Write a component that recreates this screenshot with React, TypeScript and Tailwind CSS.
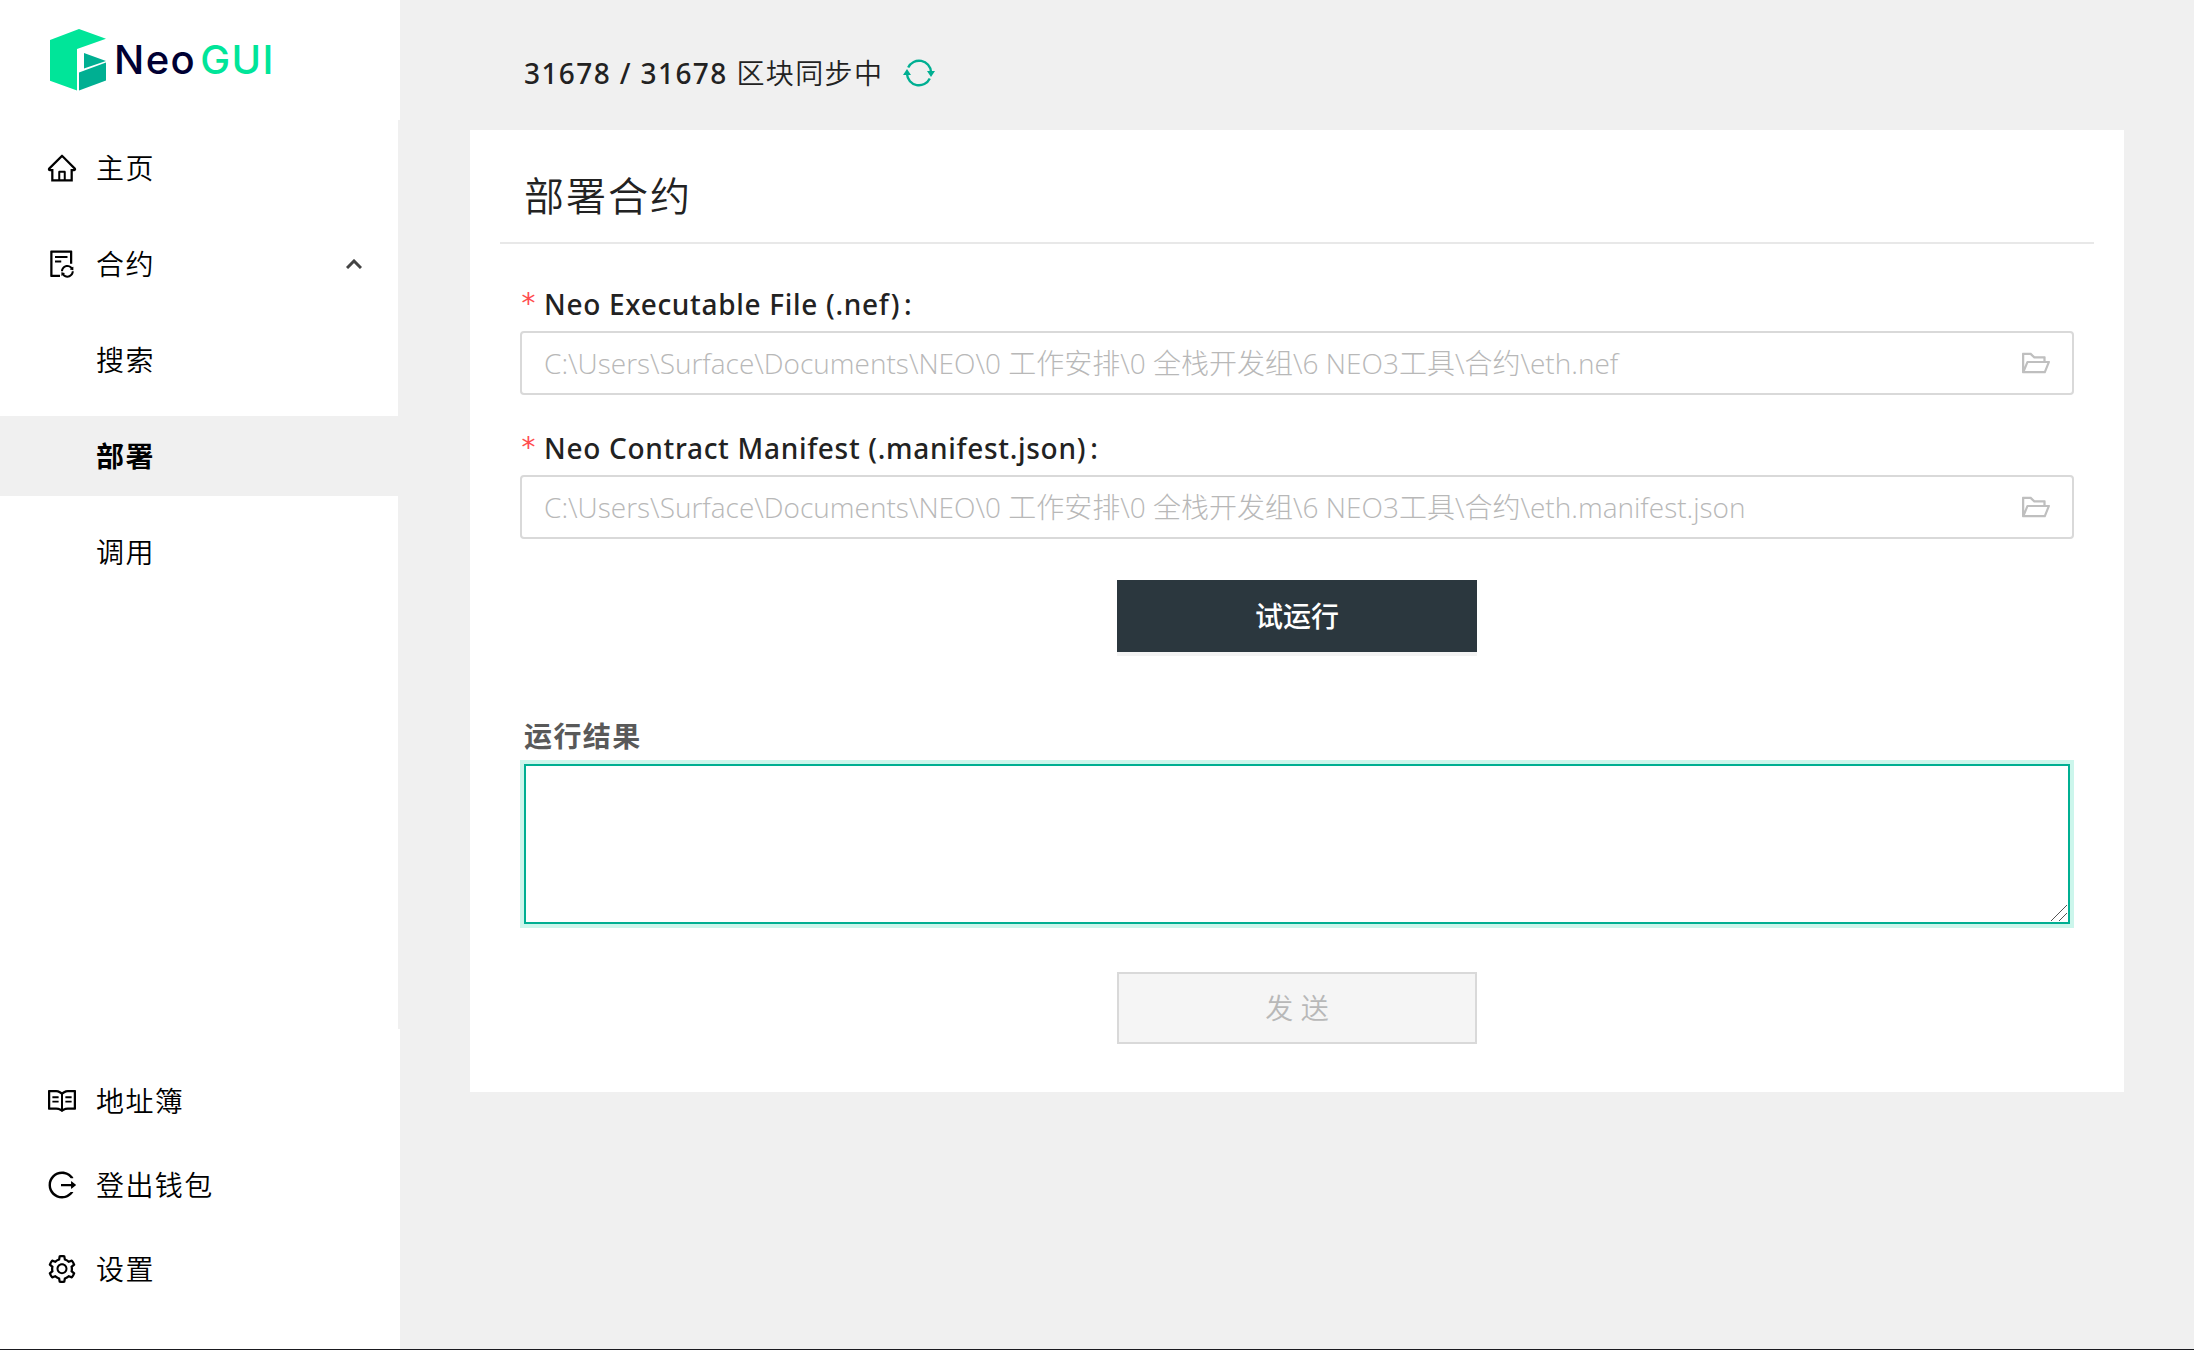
import { useId } from "react";
import type { ReactNode } from "react";
import {
  AiOutlineFileSync,
  AiOutlineFolderOpen,
  AiOutlineHome,
  AiOutlineLogout,
  AiOutlineRead,
  AiOutlineSetting,
} from "react-icons/ai";

const contractLinks = [
  { label: "搜索", active: false },
  { label: "部署", active: true },
  { label: "调用", active: false },
];

const footerLinks = [
  { label: "地址簿", icon: <AiOutlineRead /> },
  { label: "登出钱包", icon: <AiOutlineLogout /> },
  { label: "设置", icon: <AiOutlineSetting /> },
];

function Logo() {
  return (
    <a href="#" className="flex h-[120px] items-center gap-2 pl-[50px]" aria-label="Neo GUI">
      <svg viewBox="0 0 56 62" className="h-[62px] w-14" aria-hidden="true">
        <path d="M0 11 29 0 56 9.7 27 20V61.5L0 51.7Z" fill="#00e599" />
        <path d="M34 24 56 32 34 39.5Z" fill="#00af92" />
        <path d="M29 43.5 56 33.5V51.5L29 61.5Z" fill="#00af92" />
      </svg>
      <span className="flex gap-1 font-['Inter'] text-[40px] leading-none font-medium">
        <span className="text-[#000033]">Neo</span>
        <span className="text-[#00e599]">GUI</span>
      </span>
    </a>
  );
}

function NavLink({ icon, children }: { icon: ReactNode; children: ReactNode }) {
  return (
    <a href="#" className="flex h-20 items-center gap-[18px] pl-[46px]">
      <span className="text-[32px]">{icon}</span>
      {children}
    </a>
  );
}

function Sidebar() {
  return (
    <aside className="flex w-[400px] shrink-0 flex-col bg-white font-[350] tracking-wider text-black">
      <Logo />
      <nav className="flex flex-1 flex-col gap-4 border-r-2 border-[#f0f0f0] pt-2">
        <NavLink icon={<AiOutlineHome />}>主页</NavLink>
        <button type="button" className="flex h-20 items-center gap-[18px] pr-9 pl-[46px] tracking-wider">
          <AiOutlineFileSync className="text-[32px]" />
          <span className="flex-1 text-left">合约</span>
          <svg viewBox="0 0 16 10" className="h-2.5 w-4" fill="none" stroke="#444" strokeWidth="3" aria-hidden="true">
            <path d="M1 9 8 2 15 9" />
          </svg>
        </button>
        {contractLinks.map(({ label, active }) => (
          <a
            key={label}
            href="#"
            className={active ? "flex h-20 items-center bg-[#f0f0f0] pl-24 font-bold" : "flex h-20 items-center pl-24"}
          >
            {label}
          </a>
        ))}
      </nav>
      <nav className="flex flex-col gap-1 pt-8 pb-10">
        {footerLinks.map(({ label, icon }) => (
          <NavLink key={label} icon={icon}>
            {label}
          </NavLink>
        ))}
      </nav>
    </aside>
  );
}

function SyncIcon() {
  return (
    <svg viewBox="0 0 32 32" className="size-8" fill="none" stroke="#00af92" strokeWidth="2.4" aria-hidden="true">
      <path d="M5.2 10.5A12 12 0 0 1 28 15" />
      <path d="M26.8 21.5A12 12 0 0 1 4 17" />
      <path d="M24 14h8l-4 6zM0 18h8l-4-6z" fill="#00af92" stroke="none" />
    </svg>
  );
}

function FileField({ label, placeholder }: { label: string; placeholder: string }) {
  const id = useId();
  return (
    <div className="flex flex-col gap-1.5">
      <label htmlFor={id} className="flex h-[42px] items-center font-['Noto_Sans'] font-medium tracking-wide">
        <span className="w-6 font-['DejaVu_Sans_Mono'] text-[#ff4d4f]">*</span>
        {label}
        <span className="ml-1">:</span>
      </label>
      <div className="flex h-16 items-center rounded-sm border-2 border-[#d9d9d9] pr-5 pl-[22px]">
        <input
          id={id}
          type="text"
          placeholder={placeholder}
          className="min-w-0 flex-1 bg-transparent font-light outline-none placeholder:text-[#b8b8b8]"
        />
        <button type="button" aria-label="选择文件" className="text-[#bfbfbf]">
          <AiOutlineFolderOpen className="text-[32px]" />
        </button>
      </div>
    </div>
  );
}

function ResultBox() {
  return (
    <div className="relative mx-1 mt-2 flex">
      <textarea
        id="result"
        className="h-40 w-full resize-y border-2 border-[#00af92] px-5 py-2 shadow-[0_0_0_4px_#ccf6ec] outline-none [&::-webkit-resizer]:hidden"
      />
      <svg
        viewBox="0 0 16 16"
        className="pointer-events-none absolute right-[3px] bottom-[3px] size-4"
        stroke="#555"
        aria-hidden="true"
      >
        <path d="M0 16 16 0M8 16l8-8" />
      </svg>
    </div>
  );
}

export default function App() {
  return (
    <div className="flex min-h-screen border-b border-[#1a1a1f] bg-[#f0f0f0] font-['Open_Sans','Noto_Sans_CJK_SC',sans-serif] text-[28px] leading-10 text-[#222]">
      <Sidebar />
      <main className="flex-1 pr-[70px] pl-[70px]">
        <header className="flex h-[130px] items-center gap-5 pt-4 pl-[54px]">
          <p className="font-[350] tracking-wider">
            <span className="font-['Noto_Sans'] font-medium">31678 / 31678</span> 区块同步中
          </p>
          <button type="button" aria-label="同步">
            <SyncIcon />
          </button>
        </header>
        <section className="bg-white px-[30px] pt-9 pb-12">
          <h1 className="border-b-2 border-[#e8e8e8] pb-4 pl-6 text-[40px] leading-[60px] font-[350] tracking-wider">
            部署合约
          </h1>
          <form className="flex flex-col px-5 pt-[39px]">
            <div className="flex flex-col gap-8">
              <FileField
                label="Neo Executable File (.nef)"
                placeholder="C:\Users\Surface\Documents\NEO\0 工作安排\0 全栈开发组\6 NEO3工具\合约\eth.nef"
              />
              <FileField
                label="Neo Contract Manifest (.manifest.json)"
                placeholder="C:\Users\Surface\Documents\NEO\0 工作安排\0 全栈开发组\6 NEO3工具\合约\eth.manifest.json"
              />
            </div>
            <button
              type="button"
              className="mt-[41px] h-[72px] w-[360px] self-center bg-[#2b373e] font-medium text-white shadow-[0_4px_0_#f3f3f3]"
            >
              试运行
            </button>
            <label htmlFor="result" className="mt-16 px-1 font-bold tracking-wider text-[#595959]">
              运行结果
            </label>
            <ResultBox />
            <button
              type="submit"
              disabled
              className="mt-12 h-[72px] w-[360px] self-center border-2 border-[#d9d9d9] bg-[#f5f5f5] font-[350] text-[#b8b8b8]"
            >
              发 送
            </button>
          </form>
        </section>
      </main>
    </div>
  );
}
